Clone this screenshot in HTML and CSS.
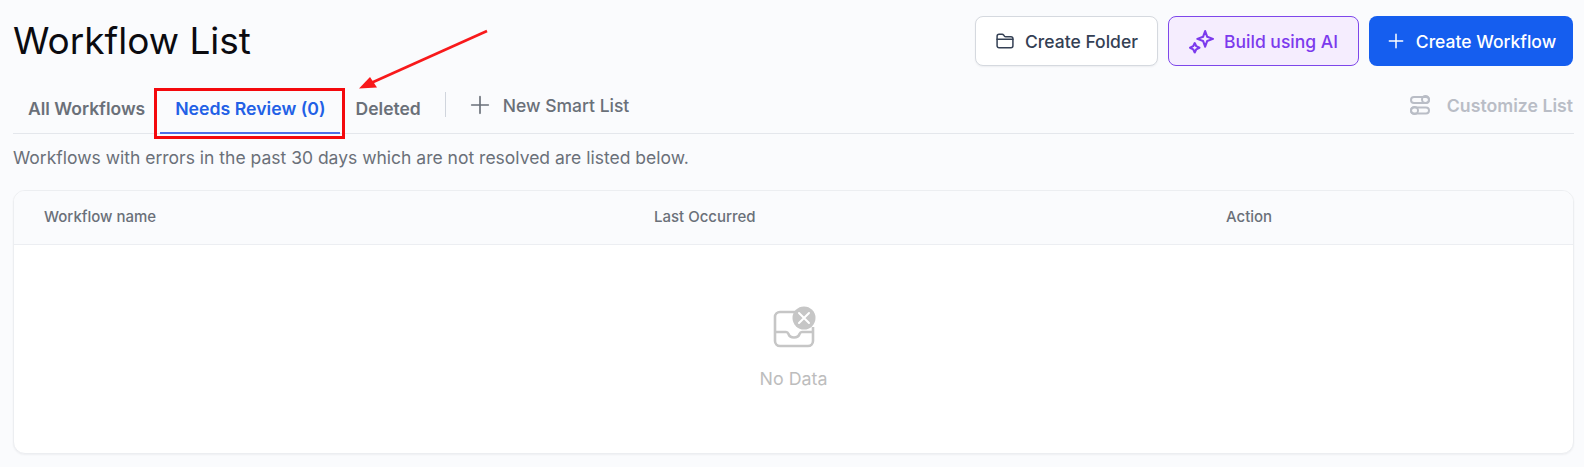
FILE: index.html
```html
<!DOCTYPE html>
<html lang="en">
<head>
<meta charset="utf-8">
<title>Workflow List</title>
<link rel="stylesheet" href="styles.css">
</head>
<body>
<main class="page">
  <header class="top">
    <h1 class="title">Workflow List</h1>
    <div class="actions">
      <button class="btn btn-white">
        <svg class="ico" viewBox="0 0 24 24" fill="none" stroke="currentColor" stroke-width="1.800" stroke-linecap="round" stroke-linejoin="round"><path d="M2.500 6.500c0-1.500 1-2.500 2.400-2.500h3.700c.8 0 1.400.4 1.900 1l1 1.500c.3.400.7.500 1.200.500h6.400c1.400 0 2.400 1 2.400 2.400v8.200c0 1.400-1 2.400-2.400 2.400H4.900c-1.400 0-2.400-1-2.400-2.400z"/><path d="M2.500 10h19"/></svg>
        Create Folder
      </button>
      <button class="btn btn-ai">
        <svg class="ico ico-ai" viewBox="0 0 24 24" fill="none" stroke="currentColor" stroke-width="2" stroke-linejoin="round"><path d="M15.500 2l2 5.500 5.500 2-5.500 2-2 5.500-2-5.500-5.500-2 5.500-2z"/><path d="M5.500 13.500l1.500 3 3 1.500-3 1.500-1.500 3-1.500-3-3-1.500 3-1.500z"/></svg>
        Build using AI
      </button>
      <button class="btn btn-blue">
        <svg class="ico" viewBox="0 0 24 24" fill="none" stroke="currentColor" stroke-width="1.800" stroke-linecap="round"><path d="M12 4v16M4 12h16"/></svg>
        Create Workflow
      </button>
    </div>
  </header>

  <nav class="tabs">
    <a class="tab tab-first">All Workflows</a>
    <a class="tab tab-active">Needs Review (0)</a>
    <a class="tab">Deleted</a>
    <span class="divider"></span>
    <a class="smart">
      <svg class="plus" viewBox="0 0 24 24" fill="none" stroke="currentColor" stroke-width="2" stroke-linecap="round"><path d="M12 2v20M2 12h20"/></svg>
      New Smart List
    </a>
    <a class="customize">
      <svg class="cust-ico" viewBox="0 0 20 22" fill="none" stroke="currentColor" stroke-width="2"><rect x="1" y="3" width="18" height="6" rx="3"/><circle cx="15.500" cy="5.500" r="3.500"/><circle cx="4.500" cy="16.500" r="3.500"/><rect x="1" y="13.500" width="18" height="6" rx="3"/></svg>
      Customize List
    </a>
  </nav>

  <p class="desc">Workflows with errors in the past 30 days which are not resolved are listed below.</p>

  <section class="card">
    <div class="thead">
      <div>Workflow name</div>
      <div>Last Occurred</div>
      <div>Action</div>
    </div>
    <div class="empty">
      <svg class="empty-ico" viewBox="0 0 44 44" fill="none">
        <path d="M24 6H8A5 5 0 0 0 3 11v24a5 5 0 0 0 5 5h28a5 5 0 0 0 5-5V21" stroke="#c6c6c6" stroke-width="2.600"/>
        <path d="M3 26h11c1.500 0 2 .8 2.500 2 .8 2.300 2.800 3.500 5.500 3.500s4.700-1.200 5.500-3.500c.5-1.200 1-2 2.500-2h11" stroke="#c6c6c6" stroke-width="2.600"/>
        <circle cx="32" cy="12" r="11.500" fill="#c6c6c6"/>
        <path d="M27 7l10 10M37 7L27 17" stroke="#fff" stroke-width="2" stroke-linecap="round"/>
      </svg>
      <div class="empty-text">No Data</div>
    </div>
  </section>
</main>

<div class="note-box"></div>
<svg class="note-arrow" viewBox="0 0 140 70" fill="none">
  <path d="M132 2L16 54" stroke="#f8191b" stroke-width="2.600"/>
  <path d="M4 59.500L15 48L22 58.500Z" fill="#f8191b"/>
</svg>
</body>
</html>
```

FILE: styles.css
```css
* { box-sizing: border-box; }
html, body { margin: 0; height: 100%; }
body {
  background: #fafbfd;
  font-family: Inter, "Liberation Sans", sans-serif;
  overflow: hidden;
  position: relative;
}
.page { padding: 16px 11px 14px 13px; }

.top {
  display: flex;
  justify-content: space-between;
  align-items: center;
  height: 50px;
}
.title {
  margin: 0;
  font-size: 37px;
  font-weight: 400;
  color: #0b0b10;
  line-height: 50px;
}
.actions { display: flex; gap: 10px; }
.btn {
  display: flex;
  align-items: center;
  justify-content: center;
  height: 50px;
  border-radius: 8px;
  font: 500 17.500px Inter, "Liberation Sans", sans-serif;
  border: 1px solid transparent;
  gap: 10px;
  white-space: nowrap;
}
.ico { width: 20px; height: 20px; flex: none; }
.btn-white {
  width: 183px;
  background: #fff;
  border-color: #d5d9df;
  color: #344054;
  box-shadow: 0 1px 2px rgba(16, 24, 40, .06);
}
.btn-ai {
  width: 191px;
  background: #f5edfe;
  border-color: #7e47ea;
  color: #7c3aed;
}
.ico-ai { width: 25px; height: 25px; }
.btn-blue {
  width: 204px;
  background: #155eef;
  color: #fff;
}

.tabs {
  display: flex;
  align-items: center;
  height: 68px;
  border-bottom: 1px solid #e4e7ec;
  margin-right: -1px;
}
.tab {
  display: flex;
  align-items: center;
  height: 100%;
  padding: 18px 16px 0;
  font-size: 17.500px;
  font-weight: 600;
  color: #6a7079;
  position: relative;
  white-space: nowrap;
}
.tab-first { padding-left: 15px; padding-right: 15px; }
.tab-active {
  color: #2260e6;
  font-size: 17.700px;
  padding-left: 15px;
  padding-right: 14px;
}
.tab-active::after {
  content: "";
  position: absolute;
  left: 0;
  right: 0;
  bottom: -1px;
  height: 2px;
  background: #4e6fe8;
}
.divider {
  width: 1px;
  height: 25px;
  background: #d0d5dd;
  margin: 0 24px 0 8px;
  position: relative;
  top: 5px;
}
.smart, .customize {
  display: flex;
  align-items: center;
  gap: 13px;
  font-size: 17.500px;
  font-weight: 500;
  color: #6a7079;
  padding-top: 11px;
  white-space: nowrap;
}
.plus { width: 20px; height: 20px; }
.customize {
  margin-left: auto;
  margin-right: 1px;
  color: #b9bdc6;
  font-size: 17.700px;
  font-weight: 600;
  gap: 17px;
}
.cust-ico { width: 20px; height: 22px; }

.desc {
  margin: 0;
  padding-top: 14px;
  font-size: 17.500px;
  line-height: 20px;
  color: #6a7079;
}

.card {
  margin-top: 22px;
  height: 264px;
  margin-right: -1px;
  border: 1px solid #eceef1;
  border-radius: 12px;
  background: #fff;
  overflow: hidden;
  box-shadow: 0 1px 2px rgba(16, 24, 40, .05);
}
.thead {
  display: grid;
  grid-template-columns: 610px 572px 1fr;
  align-items: center;
  height: 54px;
  padding: 0 0 2px 30px;
  background: #fafbfd;
  border-bottom: 1px solid #eceef2;
  font-size: 15px;
  font-weight: 500;
  color: #6a7079;
}
.empty {
  display: flex;
  flex-direction: column;
  align-items: center;
  padding-top: 61px;
}
.empty-ico { width: 44px; height: 44px; }
.empty-text {
  margin-top: 19px;
  font-size: 17.800px;
  line-height: 20px;
  color: #bdbdbd;
}

.note-box {
  position: absolute;
  left: 154px;
  top: 88px;
  width: 191px;
  height: 51px;
  border: 3px solid #f4090d;
}
.note-arrow {
  position: absolute;
  left: 355px;
  top: 29px;
  width: 140px;
  height: 70px;
}
```
